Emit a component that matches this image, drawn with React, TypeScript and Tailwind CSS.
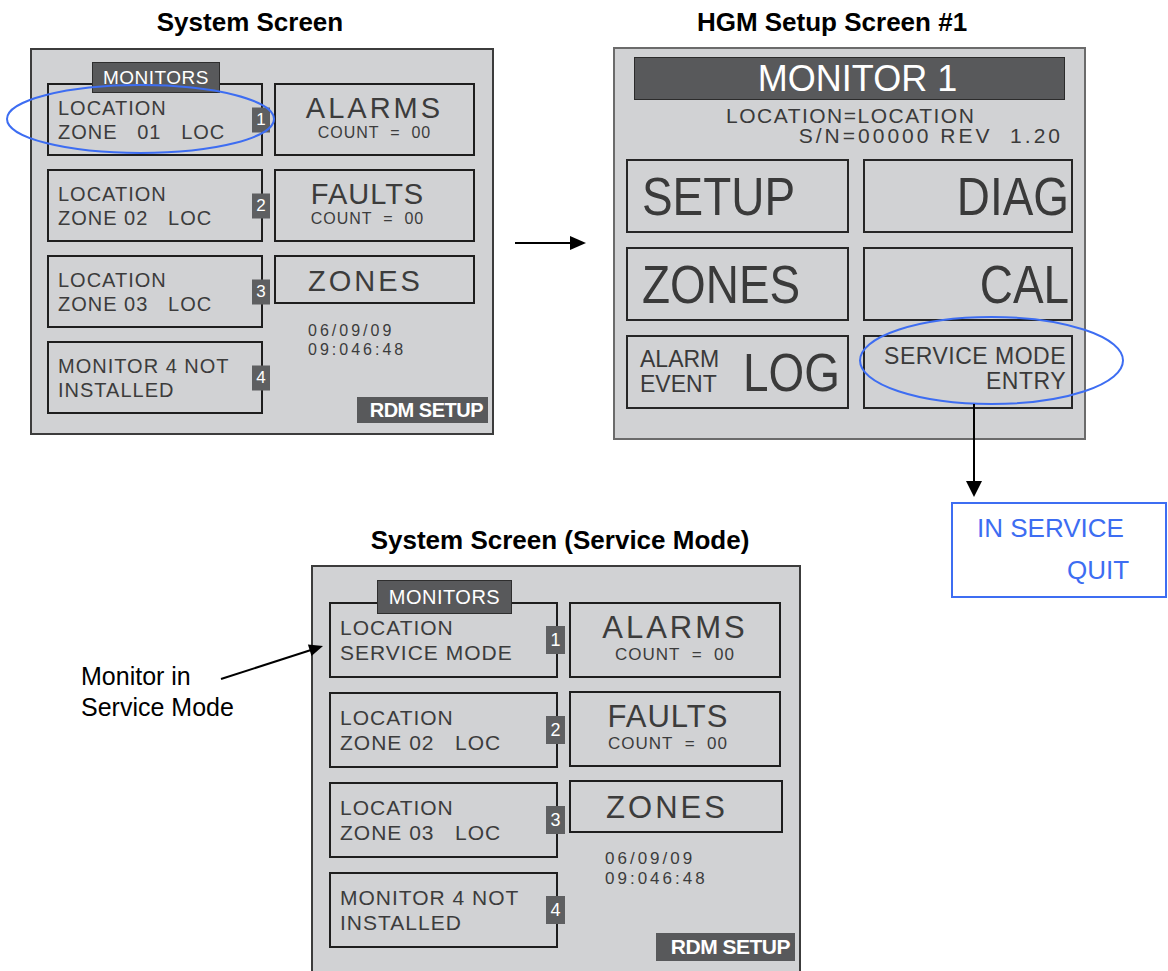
type Cfg = {
  panel: string;
  leftGap: string;
  box: string;
  text: string;
  badge: string;
  tab: string;
  right: string;
  bigBox: string;
  zonesBox: string;
  title: string;
  count: string;
  date: string;
  rdm: string;
};

const TOP: Cfg = {
  panel: "left-[30px] top-[48px] w-[464px] h-[387px] pt-[33px] pl-[15px] pr-[4px] pb-[10px] gap-[11px]",
  leftGap: "gap-[13px]",
  box: "w-[216px] h-[73px]",
  text: "text-[20px] leading-[24px] tracking-[1px] pl-[9px]",
  badge: "w-[18px] h-[25px] text-[17px] -right-[9px]",
  tab: "left-[43px] -top-[23px] w-[128px] h-[31px] text-[19px]",
  right: "w-[214px]",
  bigBox: "w-[201px] h-[73px] pt-[8px]",
  zonesBox: "w-[201px] h-[49px] pt-[9px]",
  title: "text-[29px] leading-[30px]",
  count: "text-[16px] leading-[16px] tracking-[1px] mt-[2px]",
  date: "text-[16px] leading-[19px] tracking-[3px] pl-[34px] mt-[17px]",
  rdm: "w-[131px] h-[26px] text-[20px]",
};

const BOT: Cfg = {
  panel: "left-[311px] top-[565px] w-[490px] h-[420px] pt-[35px] pl-[16px] pr-[4px] pb-[22px] gap-[11px]",
  leftGap: "gap-[14px]",
  box: "w-[229px] h-[76px]",
  text: "text-[21px] leading-[25px] tracking-[1px] pl-[9px]",
  badge: "w-[19px] h-[28px] text-[18px] -right-[9px]",
  tab: "left-[46px] -top-[24px] w-[135px] h-[34px] text-[20px]",
  right: "w-[230px]",
  bigBox: "w-[212px] h-[76px] pt-[8px]",
  zonesBox: "w-[214px] h-[53px] pt-[10px]",
  title: "text-[31px] leading-[32px]",
  count: "text-[17px] leading-[17px] tracking-[1px] mt-[2px]",
  date: "text-[17px] leading-[20px] tracking-[3px] pl-[36px] mt-[16px]",
  rdm: "w-[139px] h-[28px] text-[21px]",
};

function SystemScreen({ c, first }: { c: Cfg; first: [string, string] }) {
  const rows: [string, string][] = [
    first,
    ["LOCATION", "ZONE 02   LOC"],
    ["LOCATION", "ZONE 03   LOC"],
    ["MONITOR 4 NOT", "INSTALLED"],
  ];
  return (
    <div className={`absolute flex border-2 border-[#3c3c3c] bg-[#d1d2d4] text-[#3c3c3c] ${c.panel}`}>
      <div className={`flex flex-col ${c.leftGap}`}>
        {rows.map((r, i) => (
          <div
            key={i}
            className={`relative flex flex-col justify-center border-2 border-[#1e1e1e] whitespace-pre ${c.box} ${c.text}`}
          >
            <span>{r[0]}</span>
            <span>{r[1]}</span>
            <div
              className={`absolute top-1/2 -translate-y-1/2 flex items-center justify-center bg-[#5e5f61] text-white tracking-normal ${c.badge}`}
            >
              {i + 1}
            </div>
            {i === 0 && (
              <div
                className={`absolute flex items-center justify-center bg-[#58595b] border border-[#2e2e2e] text-white tracking-[0.5px] ${c.tab}`}
              >
                MONITORS
              </div>
            )}
          </div>
        ))}
      </div>
      <div className={`flex flex-col ${c.right}`}>
        <div className={`flex flex-col items-center border-2 border-[#1e1e1e] ${c.bigBox}`}>
          <span className={`tracking-[3px] ${c.title}`}>ALARMS</span>
          <span className={`whitespace-pre ${c.count}`}>COUNT  =  00</span>
        </div>
        <div className={`mt-[13px] flex flex-col items-center pr-[14px] border-2 border-[#1e1e1e] ${c.bigBox}`}>
          <span className={`tracking-[1px] ${c.title}`}>FAULTS</span>
          <span className={`whitespace-pre ${c.count}`}>COUNT  =  00</span>
        </div>
        <div className={`mt-[13px] flex flex-col items-center pr-[18px] border-2 border-[#1e1e1e] ${c.zonesBox}`}>
          <span className={`tracking-[3px] ${c.title}`}>ZONES</span>
        </div>
        <div className={c.date}>
          <div>06/09/09</div>
          <div>09:046:48</div>
        </div>
        <div
          className={`mt-auto self-end flex items-center justify-end pr-[5px] bg-[#58595b] text-white font-bold tracking-[-0.5px] ${c.rdm}`}
        >
          RDM SETUP
        </div>
      </div>
    </div>
  );
}

function Cell({ children, cls }: { children: React.ReactNode; cls: string }) {
  return <div className={`h-[74px] border-2 border-[#262626] flex ${cls}`}>{children}</div>;
}

export default function App() {
  const big = "inline-block scale-x-85 text-[54px] leading-none";
  return (
    <div className="relative w-[1168px] h-[971px] overflow-hidden bg-white font-['Liberation_Sans',Arial,sans-serif]">
      <div className="absolute left-[50px] top-[7px] w-[400px] text-center text-[26px] leading-[30px] font-bold text-black">
        System Screen
      </div>
      <div className="absolute left-[632px] top-[7px] w-[400px] text-center text-[26px] leading-[30px] font-bold text-black">
        HGM Setup Screen #1
      </div>
      <div className="absolute left-[360px] top-[525px] w-[400px] text-center text-[26px] leading-[30px] font-bold text-black">
        System Screen (Service Mode)
      </div>

      <SystemScreen c={TOP} first={["LOCATION", "ZONE   01   LOC"]} />
      <SystemScreen c={BOT} first={["LOCATION", "SERVICE MODE"]} />

      {/* HGM setup screen */}
      <div className="absolute left-[613px] top-[47px] w-[473px] h-[393px] border-2 border-[#6b6b6b] bg-[#d1d2d4] pt-[8px] px-[11px] flex flex-col text-[#3a3a3a]">
        <div className="mx-[8px] h-[43px] bg-[#58595b] border border-[#2b2b2b] flex items-center justify-center pl-[16px] text-white text-[36px] leading-none">
          MONITOR 1
        </div>
        <div className="mt-[6px] text-[21px] leading-[20px]">
          <div className="pl-[100px] tracking-[1.5px]">LOCATION=LOCATION</div>
          <div className="text-right pr-[10px] tracking-[3px] whitespace-pre">S/N=00000 REV  1.20</div>
        </div>
        <div className="mt-[13px] grid grid-cols-[223px_210px] gap-x-[14px] gap-y-[14px]">
          <Cell cls="items-center pl-[14px]">
            <span className={`${big} origin-left`}>SETUP</span>
          </Cell>
          <Cell cls="items-center justify-end pr-[2px]">
            <span className={`${big} origin-right`}>DIAG</span>
          </Cell>
          <Cell cls="items-center pl-[14px]">
            <span className={`${big} origin-left`}>ZONES</span>
          </Cell>
          <Cell cls="items-center justify-end pr-[2px]">
            <span className={`${big} origin-right`}>CAL</span>
          </Cell>
          <Cell cls="items-center pl-[12px]">
            <div className="text-[23px] leading-[25px]">
              <div>ALARM</div>
              <div>EVENT</div>
            </div>
            <span className={`${big} origin-left ml-[24px]`}>LOG</span>
          </Cell>
          <Cell cls="flex-col items-end pt-[7px] pr-[5px] text-[23px] leading-[25px] tracking-[0.5px]">
            <span>SERVICE MODE</span>
            <span>ENTRY</span>
          </Cell>
        </div>
      </div>

      {/* result box */}
      <div className="absolute left-[951px] top-[502px] w-[216px] h-[96px] border-2 border-[#3d6df2] text-[#3d6df2] text-[26px] leading-[30px] pt-[9px] pl-[24px]">
        <div>IN SERVICE</div>
        <div className="mt-[12px] pl-[90px]">QUIT</div>
      </div>

      <div className="absolute left-[81px] top-[661px] text-[25px] leading-[31px] text-black">
        <div>Monitor in</div>
        <div>Service Mode</div>
      </div>

      <svg className="absolute inset-0 pointer-events-none" width="1168" height="971" viewBox="0 0 1168 971">
        <ellipse cx="140.5" cy="119" rx="133.5" ry="34" fill="none" stroke="#3d6df2" strokeWidth="2" />
        <ellipse cx="991.5" cy="360.5" rx="131.5" ry="43.5" fill="none" stroke="#3d6df2" strokeWidth="2" />
        <line x1="515" y1="243" x2="572" y2="243" stroke="#000" strokeWidth="2" />
        <polygon points="570,236 586,243 570,250" fill="#000" />
        <line x1="974" y1="404" x2="974" y2="484" stroke="#000" strokeWidth="2" />
        <polygon points="966,481 982,481 974,497" fill="#000" />
        <line x1="221" y1="679" x2="311" y2="650" stroke="#000" strokeWidth="2" />
        <polygon points="323,646 311.5,656 307.9,644.6" fill="#000" />
      </svg>
    </div>
  );
}
